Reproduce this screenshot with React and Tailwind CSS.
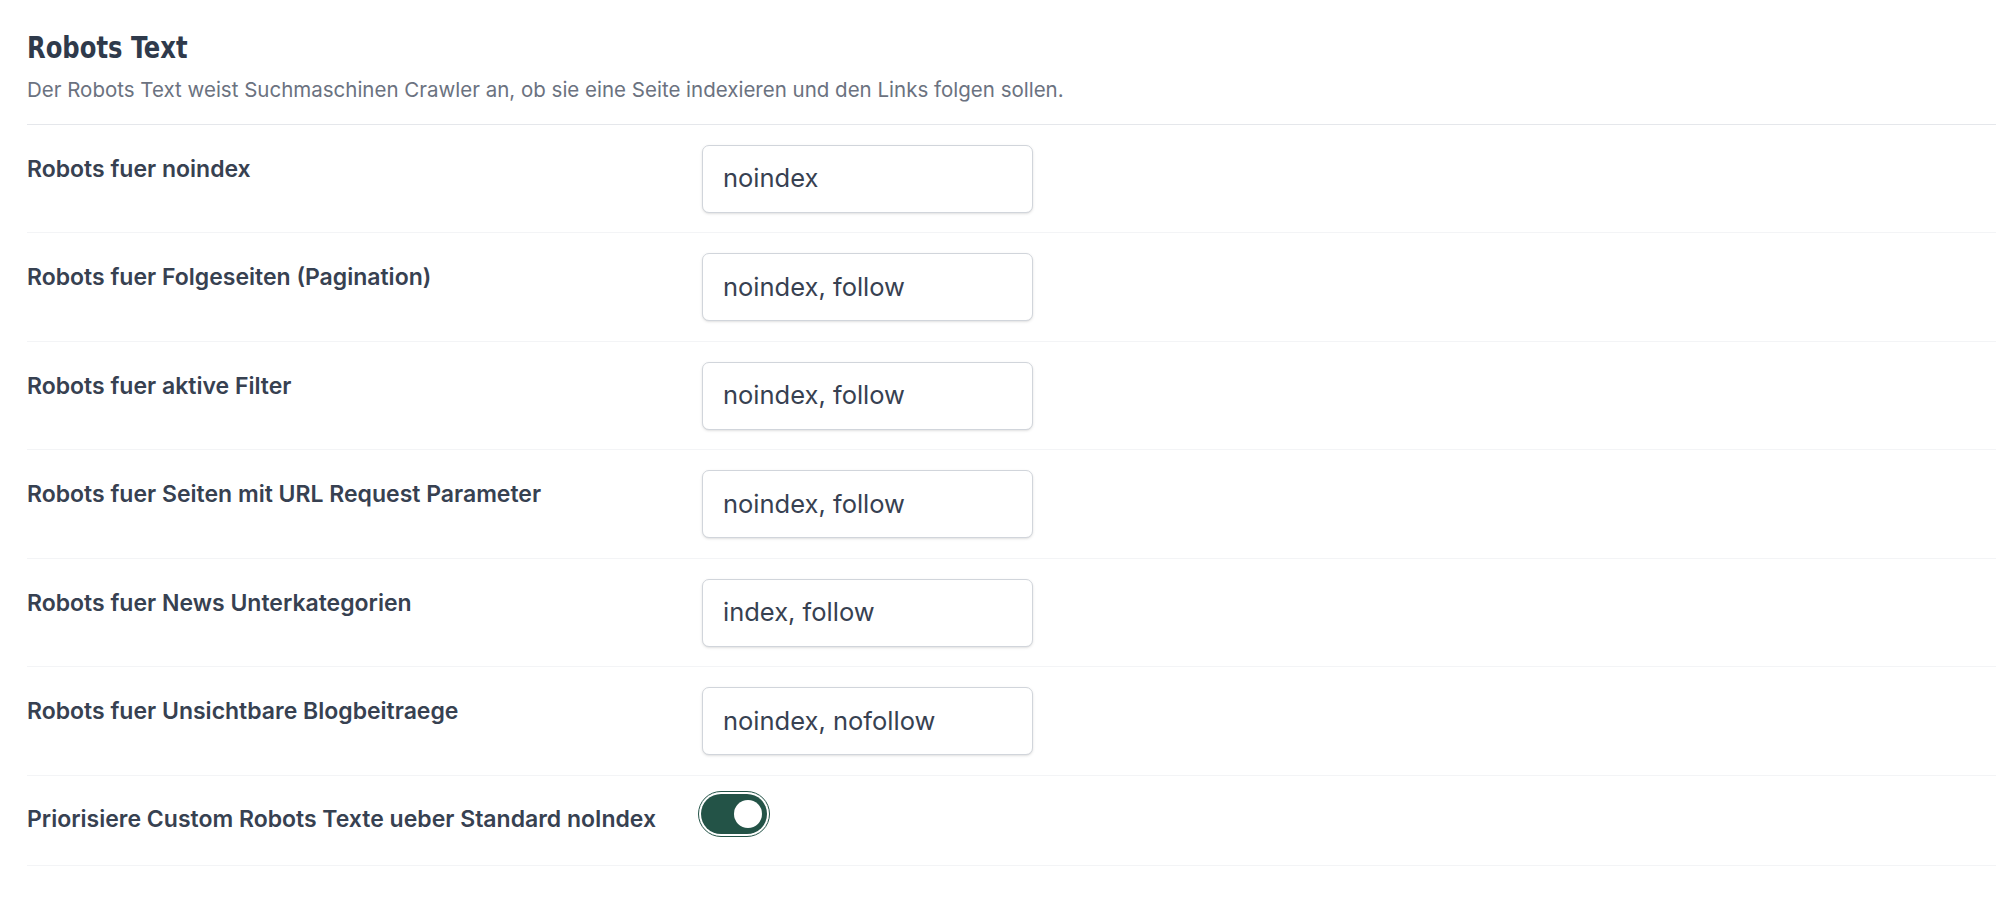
import React from "react";

const rows = [
  ["Robots fuer noindex", "noindex"],
  ["Robots fuer Folgeseiten (Pagination)", "noindex, follow"],
  ["Robots fuer aktive Filter", "noindex, follow"],
  ["Robots fuer Seiten mit URL Request Parameter", "noindex, follow"],
  ["Robots fuer News Unterkategorien", "index, follow"],
  ["Robots fuer Unsichtbare Blogbeitraege", "noindex, nofollow"],
];

export default function App() {
  return (
    <div className="min-h-screen bg-white pl-[27px] pr-[18px] pt-[27px] font-['Inter',sans-serif]">
      <div className="border-b border-[#e5e7eb] pb-[18.5px]">
        <h1 className="origin-left scale-x-[0.87] font-['DejaVu_Sans_Condensed','DejaVu_Sans',sans-serif] text-[31px] font-bold leading-[40px] text-[#2f3a4b] [font-stretch:condensed]">
          Robots Text
        </h1>
        <p className="mt-[8px] text-[20.5px] leading-[30px] text-[#6b7280]">
          Der Robots Text weist Suchmaschinen Crawler an, ob sie eine Seite indexieren und den Links folgen sollen.
        </p>
      </div>
      {rows.map(([label, value]) => (
        <div
          key={label}
          className="grid grid-cols-[675px_1fr] border-b border-[#f3f4f6] pt-[20px] pb-[19.5px]"
        >
          <div className="pt-[8px] text-[23px] font-semibold leading-[32px] text-[#374151]">
            {label}
          </div>
          <div>
            <div className="flex h-[68px] w-[331px] items-center rounded-[7px] border border-[#d1d5db] bg-white pl-[20px] text-[25.5px] text-[#374151] shadow-sm">
              {value}
            </div>
          </div>
        </div>
      ))}
      <div className="grid h-[90px] grid-cols-[675px_1fr] items-center border-b border-[#f3f4f6]">
        <div className="pb-[2px] text-[23px] font-semibold leading-[32px] text-[#374151]">
          Priorisiere Custom Robots Texte ueber Standard noIndex
        </div>
        <div className="-mt-[12px] -ml-[4px]">
          <div className="flex h-[46px] w-[72px] items-center rounded-full border border-[#235347] bg-white p-[2px]">
            <div className="flex h-full w-full items-center justify-end rounded-full bg-[#235347] pr-[5px]">
              <div className="h-[28px] w-[28px] rounded-full bg-white" />
            </div>
          </div>
        </div>
      </div>
    </div>
  );
}
